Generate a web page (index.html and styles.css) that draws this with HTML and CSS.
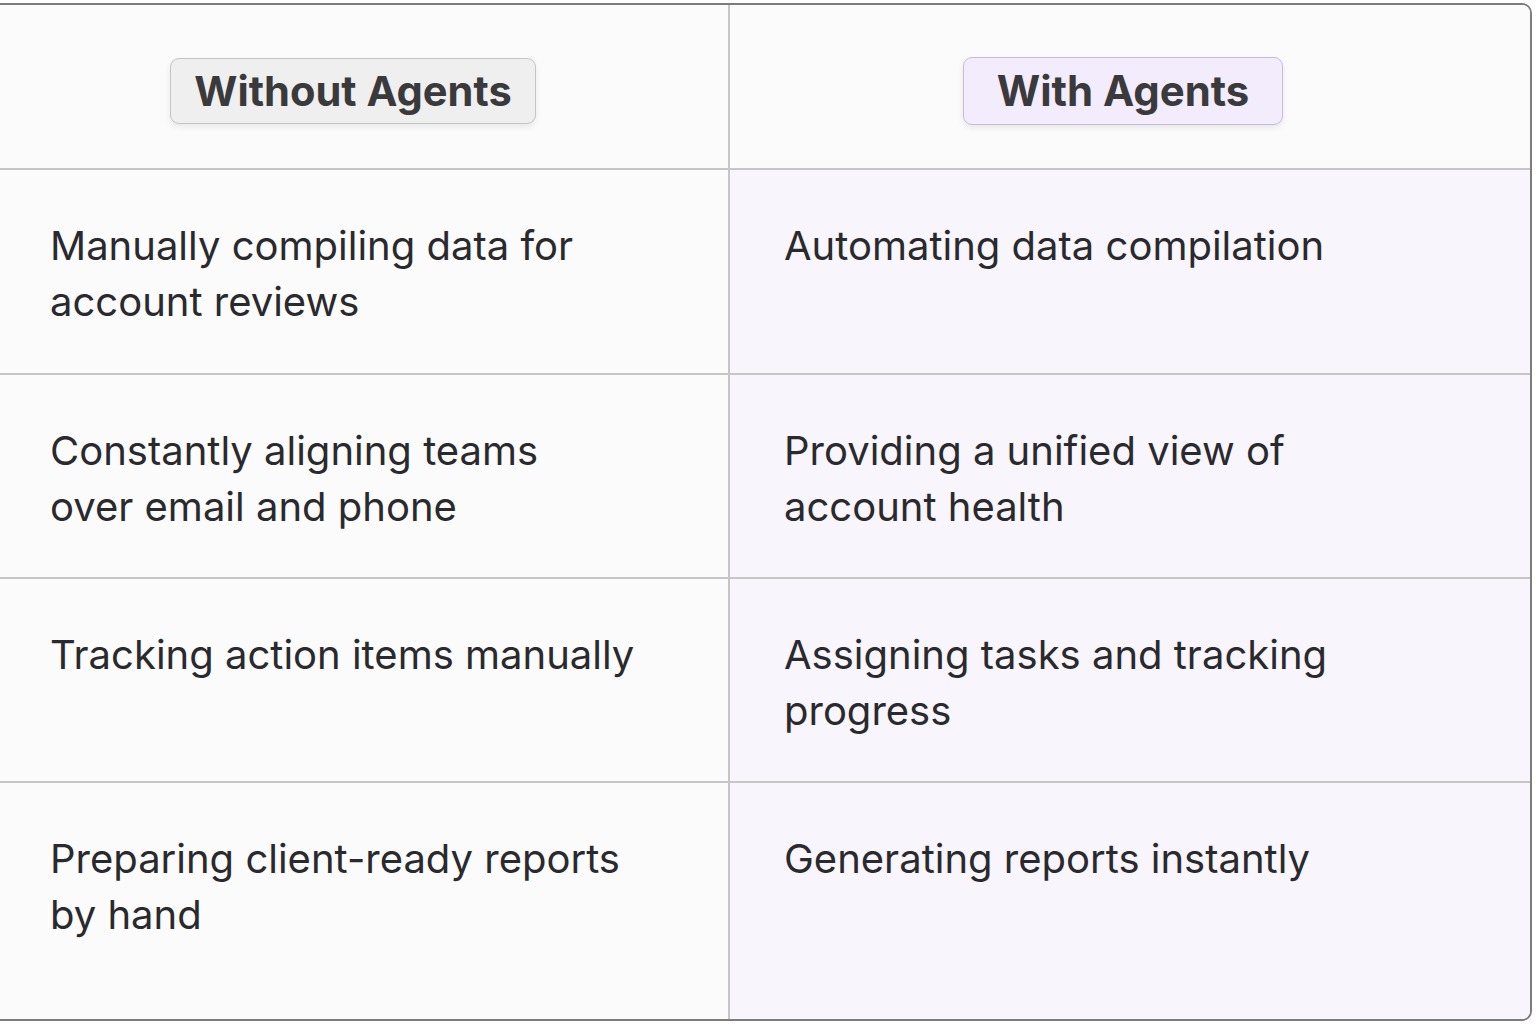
FILE: index.html
```html
<!DOCTYPE html>
<html>
<head>
<meta charset="utf-8">
<link rel="stylesheet" href="styles.css">
</head>
<body>
<div class="table">
  <div class="cell head left"><span class="pill pill-without">Without Agents</span></div>
  <div class="cell head right"><span class="pill pill-with">With Agents</span></div>

  <div class="cell left"><p>Manually compiling data for<br>account reviews</p></div>
  <div class="cell right"><p>Automating data compilation</p></div>

  <div class="cell left"><p>Constantly aligning teams<br>over email and phone</p></div>
  <div class="cell right"><p>Providing a unified view of<br>account health</p></div>

  <div class="cell left"><p>Tracking action items manually</p></div>
  <div class="cell right"><p>Assigning tasks and tracking<br>progress</p></div>

  <div class="cell left last"><p>Preparing client-ready reports<br>by hand</p></div>
  <div class="cell right last"><p>Generating reports instantly</p></div>
</div>
</body>
</html>
```
FILE: styles.css
```css
html, body {
  margin: 0;
  padding: 0;
  background: #ffffff;
  overflow: hidden;
}
body {
  width: 1536px;
  height: 1024px;
  font-family: "Inter", "Liberation Sans", sans-serif;
  color: #2a2a2e;
}
.table {
  box-sizing: border-box;
  margin: 3px 0 0 -12px;
  width: 1544px;
  height: 1018px;
  border: 2px solid #7c7c7c;
  border-radius: 10px;
  display: grid;
  grid-template-columns: 740px 1fr;
  grid-template-rows: 165px 205px 204px 204px 1fr;
  overflow: hidden;
}
.cell {
  box-sizing: border-box;
  border-bottom: 2px solid #c6c6c6;
  background: #fbfbfb;
}
.cell.last { border-bottom: none; }
.cell.left { border-right: 2px solid #c6c6c6; padding-left: 60px; }
.cell.right { background: #f8f6fc; padding-left: 54px; }
.cell.head { background: #fbfbfb; display: flex; align-items: center; justify-content: center; padding: 8px 0 0 0; }
.cell.head.left { padding-right: 12px; padding-left: 0; }
.cell.head.right { padding-right: 14px; }
.cell p {
  margin: 0;
  padding-top: 48px;
  font-size: 40px;
  line-height: 56px;
  font-weight: 400;
}
.pill {
  display: inline-block;
  font-size: 41.6px;
  font-weight: 700;
  color: #3a3a3c;
  line-height: 64px;
  border-radius: 9px;
  box-shadow: 0 3px 6px rgba(0,0,0,0.08);
}
.pill-without {
  padding: 0 23px;
  background: #efefef;
  border: 1.5px solid #c4c4c4;
}
.pill-with {
  padding: 0 33px;
  line-height: 66px;
  font-size: 41.9px;
  background: #f2ecfd;
  border: 1.5px solid #c6bbdf;
}
```
